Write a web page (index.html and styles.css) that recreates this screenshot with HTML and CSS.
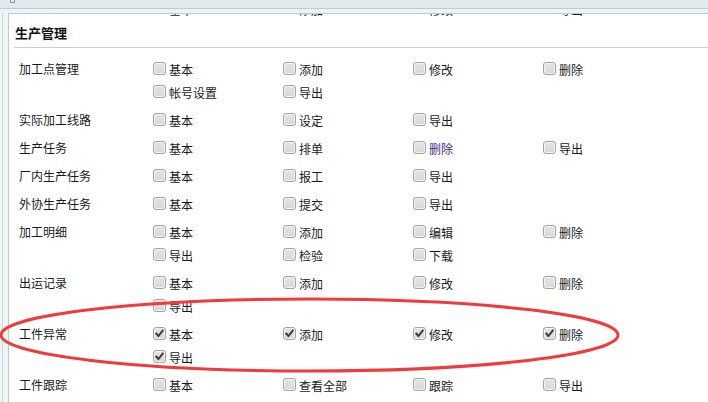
FILE: index.html
```html
<!DOCTYPE html>
<html lang="zh-CN">
<head>
<meta charset="utf-8">
<title>生产管理</title>
<link rel="stylesheet" href="styles.css">
</head>
<body>
<div class="topbar"><span class="tb-icon"></span></div>
<div class="frame">
  <div class="strip"></div>
  <div class="panel">
    <div class="row cut">
      <div class="label"></div>
      <div class="items">
        <div class="item"><span class="cb ghost"></span><span class="txt">基本</span></div>
        <div class="item"><span class="cb ghost"></span><span class="txt">添加</span></div>
        <div class="item"><span class="cb ghost"></span><span class="txt">修改</span></div>
        <div class="item"><span class="cb ghost"></span><span class="txt">导出</span></div>
      </div>
    </div>
    <h3 class="section">生产管理</h3>

    <div class="row">
      <div class="label">加工点管理</div>
      <div class="items">
        <div class="item"><span class="cb"></span><span class="txt">基本</span></div>
        <div class="item"><span class="cb"></span><span class="txt">添加</span></div>
        <div class="item"><span class="cb"></span><span class="txt">修改</span></div>
        <div class="item"><span class="cb"></span><span class="txt">删除</span></div>
        <div class="item"><span class="cb"></span><span class="txt">帐号设置</span></div>
        <div class="item"><span class="cb"></span><span class="txt">导出</span></div>
      </div>
    </div>

    <div class="row">
      <div class="label">实际加工线路</div>
      <div class="items">
        <div class="item"><span class="cb"></span><span class="txt">基本</span></div>
        <div class="item"><span class="cb"></span><span class="txt">设定</span></div>
        <div class="item"><span class="cb"></span><span class="txt">导出</span></div>
      </div>
    </div>

    <div class="row">
      <div class="label">生产任务</div>
      <div class="items">
        <div class="item"><span class="cb"></span><span class="txt">基本</span></div>
        <div class="item"><span class="cb"></span><span class="txt">排单</span></div>
        <div class="item"><span class="cb"></span><span class="txt visited">删除</span></div>
        <div class="item"><span class="cb"></span><span class="txt">导出</span></div>
      </div>
    </div>

    <div class="row">
      <div class="label">厂内生产任务</div>
      <div class="items">
        <div class="item"><span class="cb"></span><span class="txt">基本</span></div>
        <div class="item"><span class="cb"></span><span class="txt">报工</span></div>
        <div class="item"><span class="cb"></span><span class="txt">导出</span></div>
      </div>
    </div>

    <div class="row">
      <div class="label">外协生产任务</div>
      <div class="items">
        <div class="item"><span class="cb"></span><span class="txt">基本</span></div>
        <div class="item"><span class="cb"></span><span class="txt">提交</span></div>
        <div class="item"><span class="cb"></span><span class="txt">导出</span></div>
      </div>
    </div>

    <div class="row">
      <div class="label">加工明细</div>
      <div class="items">
        <div class="item"><span class="cb"></span><span class="txt">基本</span></div>
        <div class="item"><span class="cb"></span><span class="txt">添加</span></div>
        <div class="item"><span class="cb"></span><span class="txt">编辑</span></div>
        <div class="item"><span class="cb"></span><span class="txt">删除</span></div>
        <div class="item"><span class="cb"></span><span class="txt">导出</span></div>
        <div class="item"><span class="cb"></span><span class="txt">检验</span></div>
        <div class="item"><span class="cb"></span><span class="txt">下载</span></div>
      </div>
    </div>

    <div class="row">
      <div class="label">出运记录</div>
      <div class="items">
        <div class="item"><span class="cb"></span><span class="txt">基本</span></div>
        <div class="item"><span class="cb"></span><span class="txt">添加</span></div>
        <div class="item"><span class="cb"></span><span class="txt">修改</span></div>
        <div class="item"><span class="cb"></span><span class="txt">删除</span></div>
        <div class="item"><span class="cb"></span><span class="txt">导出</span></div>
      </div>
    </div>

    <div class="row">
      <div class="label">工件异常</div>
      <div class="items">
        <div class="item"><span class="cb on"><svg viewBox="0 0 11 11"><polyline points="2.3,5.6 4.4,8 8.7,2.6"/></svg></span><span class="txt">基本</span></div>
        <div class="item"><span class="cb on"><svg viewBox="0 0 11 11"><polyline points="2.3,5.6 4.4,8 8.7,2.6"/></svg></span><span class="txt">添加</span></div>
        <div class="item"><span class="cb on"><svg viewBox="0 0 11 11"><polyline points="2.3,5.6 4.4,8 8.7,2.6"/></svg></span><span class="txt">修改</span></div>
        <div class="item"><span class="cb on"><svg viewBox="0 0 11 11"><polyline points="2.3,5.6 4.4,8 8.7,2.6"/></svg></span><span class="txt">删除</span></div>
        <div class="item"><span class="cb on"><svg viewBox="0 0 11 11"><polyline points="2.3,5.6 4.4,8 8.7,2.6"/></svg></span><span class="txt">导出</span></div>
      </div>
    </div>

    <div class="row">
      <div class="label">工件跟踪</div>
      <div class="items">
        <div class="item"><span class="cb"></span><span class="txt">基本</span></div>
        <div class="item"><span class="cb"></span><span class="txt">查看全部</span></div>
        <div class="item"><span class="cb"></span><span class="txt">跟踪</span></div>
        <div class="item"><span class="cb"></span><span class="txt">导出</span></div>
      </div>
    </div>
  </div>
</div>
<svg class="mark" viewBox="0 0 708 402" width="708" height="402">
  <ellipse cx="309.5" cy="335" rx="308.5" ry="36" />
</svg>
</body>
</html>
```

FILE: styles.css
```css
* { box-sizing: border-box; }
html, body { margin: 0; padding: 0; }
body {
  width: 708px;
  height: 402px;
  overflow: hidden;
  position: relative;
  background: #eef3f5;
  font-family: "Noto Sans CJK SC", "Microsoft YaHei", sans-serif;
  font-size: 12px;
  color: #1a1a1a;
}
.topbar {
  height: 9px;
  background: #e3eaed;
  border-bottom: 1px solid #b7ced8;
  padding-left: 10px;
}
.tb-icon {
  display: block;
  width: 5px;
  height: 3px;
  border: 1px solid #7e9bb9;
  border-top: none;
}
.frame {
  display: flex;
  height: 393px;
  padding: 4px 0 0 2px;
}
.strip {
  width: 6px;
  flex: none;
  border-left: 1px solid #cbd8de;
}
.panel {
  flex: 1;
  background: #fff;
  border-top: 1px solid #b7ced8;
  border-left: 1px solid #b7ced8;
  overflow: hidden;
}
.row {
  display: flex;
  padding: 5px 0 0 10px;
}
.row.cut { margin-top: -17px; height: 29px; }
.label {
  width: 134px;
  flex: none;
  line-height: 13px;
}
.items {
  display: flex;
  flex-wrap: wrap;
  width: 520px;
}
.item {
  width: 130px;
  height: 23px;
  display: flex;
  align-items: flex-start;
  gap: 3px;
}
.cb {
  width: 13px;
  height: 13px;
  flex: none;
  border: 1px solid #a4a4a4;
  border-radius: 3px;
  background: linear-gradient(#e4e4e4, #d8d8d8);
  box-shadow: inset 0 0 0 1px #f3f3f3;
  display: flex;
}
.cb.ghost { visibility: hidden; }
.cb svg { width: 11px; height: 11px; }
.cb polyline {
  fill: none;
  stroke: #3a3a3a;
  stroke-width: 2;
  stroke-linecap: square;
}
.txt { line-height: 16px; white-space: nowrap; }
.txt.visited { color: #4a2a8c; }
.section {
  margin: 0 0 9px 5px;
  padding: 0 0 7px 1px;
  font-size: 13px;
  line-height: 14px;
  font-weight: bold;
  color: #111;
  border-bottom: 1px solid #cfcfcf;
}
.mark {
  position: absolute;
  left: 0;
  top: 0;
  pointer-events: none;
}
.mark ellipse {
  fill: none;
  stroke: #f23a3a;
  stroke-width: 3;
}
```
